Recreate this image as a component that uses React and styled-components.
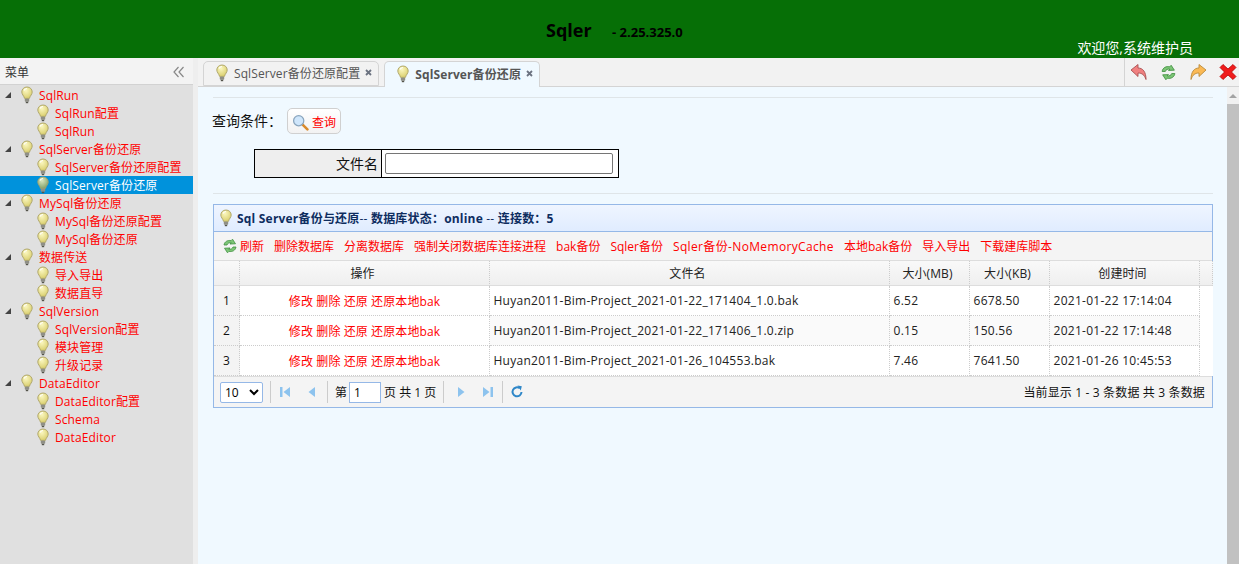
import { useId } from "react"
import styled, { createGlobalStyle } from "styled-components"

const GlobalStyle = createGlobalStyle`
  html, body {
    margin: 0;
    padding: 0;
    height: 100%;
    overflow: hidden;
  }
  body {
    font-family: "Open Sans", "Noto Sans CJK SC", sans-serif;
    font-size: 12px;
    color: #111;
  }
  * { box-sizing: border-box; }
`

const Page = styled.div`
  width: 1239px;
  height: 564px;
  display: flex;
  flex-direction: column;
  overflow: hidden;
`

const Header = styled.header`
  height: 58px;
  flex: none;
  background: #066f06;
  display: flex;
  padding: 0 46px 0 546px;
`

const Brand = styled.h1`
  width: 66px;
  margin: 18px 0 0;
  font-size: 18px;
  line-height: 24px;
  font-weight: 700;
  color: #000;
`

const Version = styled.span`
  margin-top: 24px;
  font-size: 13px;
  line-height: 16px;
  font-weight: 700;
  color: #000;
`

const Welcome = styled.div`
  align-self: flex-end;
  margin-left: auto;
  margin-bottom: 1px;
  font-size: 14px;
  line-height: 18px;
  color: #fff;
`

const Body = styled.div`
  flex: 1;
  display: flex;
  min-height: 0;
`

const Sidebar = styled.aside`
  width: 193px;
  flex: none;
  background: #e0e0e0;
`

const SideHead = styled.div`
  height: 27px;
  display: flex;
  align-items: center;
  justify-content: space-between;
  padding: 2px 8px 0 5px;
  background: #f3f3f3;
  border-bottom: 1px solid #d2d2d2;
  font-size: 12px;
  color: #333;
`

const Tree = styled.ul`
  list-style: none;
  margin: 1px 0 0;
  padding: 0;
`

const TreeRow = styled.li`
  height: 18px;
  display: flex;
  align-items: center;
  padding-left: ${p => (p.$child ? 36 : 20)}px;
  position: relative;
  background: ${p => (p.$active ? "#0092dc" : "transparent")};
  color: ${p => (p.$active ? "#fff" : "#f00")};
  font-size: 12px;
  letter-spacing: 0.12px;
  white-space: nowrap;
  gap: 5px;
`

const Expander = styled.span`
  position: absolute;
  left: 5px;
  top: 6px;
  width: 0;
  height: 0;
  border-style: solid;
  border-width: 0 0 6px 6px;
  border-color: transparent transparent #444 transparent;
`

const Splitter = styled.div`
  width: 5px;
  flex: none;
  background: #eeeeee;
`

const Main = styled.main`
  flex: 1;
  min-width: 0;
  display: flex;
  flex-direction: column;
`

const TabStrip = styled.div`
  height: 29px;
  flex: none;
  display: flex;
  align-items: flex-end;
  justify-content: space-between;
  background: #f2f2f2;
  border-bottom: 1px solid #d4d4d4;
  padding-left: 5px;
`

const Tabs = styled.div`
  display: flex;
  gap: 5px;
  align-items: flex-end;
`

const Tab = styled.div`
  height: ${p => (p.$active ? 26 : 25)}px;
  margin-bottom: ${p => (p.$active ? -1 : 0)}px;
  display: flex;
  align-items: center;
  padding: 0 6px 2px 11px;
  gap: 5px;
  border: 1px solid #d4d4d4;
  border-bottom: ${p => (p.$active ? "none" : "1px solid #d4d4d4")};
  border-radius: 5px 5px 0 0;
  background: ${p => (p.$active ? "#f0f9ff" : "#f2f2f2")};
  color: #555;
  font-size: 12px;
  letter-spacing: 0.1px;
  font-weight: ${p => (p.$active ? 700 : 400)};
`

const TabTools = styled.div`
  height: 28px;
  width: 115px;
  display: flex;
  align-items: center;
  justify-content: space-between;
  border-left: 1px solid #d4d4d4;
  padding: 0 2px 0 5px;
`

const ContentRow = styled.div`
  flex: 1;
  display: flex;
  min-height: 0;
`

const Content = styled.div`
  flex: 1;
  min-width: 0;
  background: #f0f9ff;
  padding: 10px 14px 0 15px;
`

const Rule = styled.div`
  height: 1px;
  background: #dfe5e8;
`

const QueryRow = styled.div`
  display: flex;
  align-items: center;
  gap: 5px;
  height: 26px;
  margin: 10px 0 0 -1px;
  font-size: 14px;
`

const QueryLabel = styled.span`
  margin-bottom: 3px;
`

const QueryButton = styled.button`
  width: 54px;
  height: 26px;
  padding: 2px 0 0;
  display: flex;
  align-items: center;
  justify-content: center;
  gap: 3px;
  border: 1px solid #d0d0d0;
  border-radius: 5px;
  background: linear-gradient(#fff, #f2f2f2);
  color: #f00;
  font: inherit;
  font-size: 12px;
`

const FilterTable = styled.div`
  width: 365px;
  height: 29px;
  margin: 15px 0 15px 41px;
  display: grid;
  grid-template-columns: 127px 1fr;
  border: 1px solid #000;
`

const FilterLabel = styled.div`
  background: #eee;
  border-right: 1px solid #000;
  text-align: right;
  padding-right: 3px;
  line-height: 27px;
  font-size: 14px;
`

const FilterCell = styled.div`
  padding: 3px 5px 3px 3px;
  background: #fff;
`

const FilterInput = styled.input`
  width: 100%;
  height: 21px;
  display: block;
  border: 1px solid #767676;
  border-radius: 2px;
  background: #fff;
`

const Panel = styled.section`
  margin-top: 10px;
  border: 1px solid #95b8e7;
`

const PanelTitle = styled.div`
  height: 27px;
  display: flex;
  align-items: center;
  gap: 4px;
  padding-left: 5px;
  background: linear-gradient(#eff5ff, #e0ecff);
  border-bottom: 1px solid #95b8e7;
  color: #0e2d5f;
  font-size: 12px;
  letter-spacing: 0.2px;
  white-space: pre;
`

const Strong = styled.b`
  font-weight: 700;
`

const Toolbar = styled.div`
  height: 29px;
  display: flex;
  align-items: center;
  padding-left: 8px;
  background: #f4f4f4;
  border-bottom: 1px solid #ddd;
  color: #f00;
  font-size: 12px;
  white-space: nowrap;
`

const ToolIcon = styled.span`
  display: flex;
  margin-right: 2px;
`

const ToolLink = styled.span`
  margin-right: 10px;
  letter-spacing: ${p => (p.$wide ? 0.35 : 0)}px;
`

const Grid = styled.table`
  width: 999px;
  table-layout: fixed;
  border-collapse: separate;
  border-spacing: 0;
  background: #fff;
`

const HeadCell = styled.th`
  height: 25px;
  padding: 0 4px 0 0;
  font-size: 12px;
  font-weight: 400;
  letter-spacing: 0.1px;
  color: #222;
  background: linear-gradient(#f9f9f9, #efefef);
  border-right: 1px dotted #ccc;
  border-bottom: 1px solid #ddd;
`

const IndexCell = styled.td`
  height: 30px;
  padding: 0 0 0 9px;
  background: #f4f4f4;
  border-right: 1px dotted #ccc;
  border-bottom: 1px dotted #ccc;
`

const ActionCell = styled.td`
  height: 30px;
  padding: 0;
  text-align: center;
  color: #f00;
  letter-spacing: 0.1px;
  border-right: 1px dotted #ccc;
  border-bottom: 1px dotted #ccc;
`

const Cell = styled.td`
  height: 30px;
  padding: 0 3px 0 3.5px;
  white-space: nowrap;
  letter-spacing: 0.27px;
  color: #222;
  background: ${p => (p.$odd ? "#fafafa" : "#fff")};
  border-right: 1px dotted #ccc;
  border-bottom: 1px dotted #ccc;
`

const Filler = styled.td`
  padding: 0;
  background: #fff;
`

const Pager = styled.div`
  height: 31px;
  display: flex;
  align-items: center;
  padding: 0 7px 0 6px;
  background: #f4f4f4;
  border-top: 1px solid #ddd;
  font-size: 12px;
`

const PageSize = styled.select`
  width: 43px;
  height: 21px;
  border: 1px solid #95b8e7;
  border-radius: 2px;
  background: #fff;
  font: inherit;
  font-size: 12px;
  padding: 0;
`

const Sep = styled.span`
  width: 1px;
  height: 22px;
  margin: 0 ${p => p.$gap}px 0 ${p => p.$left ?? p.$gap}px;
  background: #ccc;
`

const PagerButton = styled.span`
  display: flex;
  width: 16px;
  justify-content: center;
  margin-right: ${p => p.$gap ?? 0}px;
`

const PageInput = styled.input`
  width: 32px;
  height: 21px;
  margin: 0 3px 0 2px;
  padding: 0 4px;
  border: 1px solid #95b8e7;
  font: inherit;
  font-size: 12px;
`

const PageInfo = styled.span`
  margin-left: auto;
  letter-spacing: 0.15px;
`

const Scrollbar = styled.div`
  width: 12px;
  flex: none;
  display: flex;
  flex-direction: column;
  background: #f1f1f1;
`

const ScrollUp = styled.div`
  height: 17px;
  flex: none;
  display: flex;
  align-items: center;
  justify-content: center;

  &::before {
    content: '';
    border-style: solid;
    border-width: 0 4px 4px 4px;
    border-color: transparent transparent #a3a3a3 transparent;
  }
`

const ScrollThumb = styled.div`
  flex: 1;
  background: #c1c1c1;
`

const Icon = styled.svg`
  flex: none;
  transform: ${p => (p.$flip ? "scaleX(-1)" : "none")};
`

function Bulb({ dim }) {
  const id = useId()
  const light = dim ? "#dbe8c0" : "#fbf7c0"
  const dark = dim ? "#7f9f68" : "#d8cd6a"
  return (
    <Icon width="14" height="18" viewBox="0 0 14 18">
      <defs>
        <radialGradient id={id} cx="0.4" cy="0.3" r="0.75">
          <stop offset="0" stopColor={light} />
          <stop offset="1" stopColor={dark} />
        </radialGradient>
      </defs>
      <path d="M7 1C3.900 1 1.800 3.300 1.800 6c0 2.400 2 3.600 2.800 6.400h4.800C10.200 9.600 12.200 8.400 12.200 6 12.200 3.300 10.100 1 7 1z" fill={`url(#${id})`} stroke="#aaa266" strokeWidth="0.900" />
      <path d="M4 4.500C4.500 3.300 5.600 2.600 7 2.500" fill="none" stroke="#ffffff" strokeWidth="1.200" />
      <rect x="4.800" y="12.800" width="4.400" height="3" rx="0.800" fill="#8f8f86" />
      <rect x="5.800" y="15.800" width="2.400" height="1.400" fill="#55554c" />
    </Icon>
  )
}

function Refresh({ size = 16 }) {
  return (
    <Icon width={size} height={size} viewBox="0 0 16 16">
      <path d="M2 7C2.500 3.500 6 1.800 9 2.700L10.500 1.200 13.500 5.800 8 6 9.300 4.900C7.300 4.400 5.500 5.300 5 7z" fill="#7cc576" stroke="#3f8f3f" strokeWidth="0.800" />
      <path d="M14 9C13.500 12.500 10 14.200 7 13.300L5.500 14.800 2.500 10.200 8 10 6.700 11.100C8.700 11.600 10.500 10.700 11 9z" fill="#7cc576" stroke="#3f8f3f" strokeWidth="0.800" />
    </Icon>
  )
}

function Arrow({ fill, stroke, flip }) {
  return (
    <Icon width="18" height="18" viewBox="0 0 18 18" $flip={flip}>
      <path d="M1 7L8 1.500V5C13 5 16 9 16 16.500 14.500 12 12 10 8 10V13.500z" fill={fill} stroke={stroke} strokeWidth="0.900" strokeLinejoin="round" />
    </Icon>
  )
}

function CloseX() {
  return (
    <Icon width="18" height="18" viewBox="0 0 18 18">
      <path d="M4 1.500L9 6 14 1.500 17 4.500 12.500 9 17 13.500 14 16.500 9 12 4 16.500 1 13.500 5.500 9 1 4.500z" fill="#f01c1c" stroke="#b50000" strokeWidth="0.800" strokeLinejoin="round" />
    </Icon>
  )
}

function TabX() {
  return (
    <Icon width="7" height="7" viewBox="0 0 7 7">
      <path d="M1 1l5 5M6 1L1 6" fill="none" stroke="#6b7280" strokeWidth="1.800" />
    </Icon>
  )
}

function Search() {
  return (
    <Icon width="17" height="17" viewBox="0 0 16 16">
      <line x1="9.500" y1="9.500" x2="14.500" y2="14.500" stroke="#d98a2b" strokeWidth="2.400" strokeLinecap="round" />
      <circle cx="6.300" cy="6.300" r="4.800" fill="#cfe6fb" stroke="#8aa5bd" strokeWidth="1.200" />
    </Icon>
  )
}

function Collapse() {
  return (
    <Icon width="12" height="12" viewBox="0 0 12 12">
      <path d="M5.500 1L1 6l4.500 5M10.500 1L6 6l4.500 5" fill="none" stroke="#888" strokeWidth="1.200" />
    </Icon>
  )
}

function PagerIcon({ kind }) {
  const shapes = {
    first: "M1 2h2.500v10H1zM11 2v10L4.500 7z",
    prev: "M10 2v10L3.500 7z",
    next: "M4 2v10l6.500-5z",
    last: "M3 2v10l6.500-5zM10.500 2H13v10h-2.500z",
  }
  return (
    <Icon width="14" height="14" viewBox="0 0 14 14">
      <path d={shapes[kind]} fill="#8dc3ee" />
    </Icon>
  )
}

function PagerReload() {
  return (
    <Icon width="14" height="14" viewBox="0 0 14 14">
      <path d="M9.800 3.300A4.500 4.500 0 1 0 11.500 7" fill="none" stroke="#2f87c8" strokeWidth="2" />
      <path d="M7.500 0.500L11.800 1.200 10.800 5.500z" fill="#2f87c8" />
    </Icon>
  )
}

const menu = [
  { name: "SqlRun", items: ["SqlRun配置", "SqlRun"] },
  { name: "SqlServer备份还原", items: ["SqlServer备份还原配置", "SqlServer备份还原"] },
  { name: "MySql备份还原", items: ["MySql备份还原配置", "MySql备份还原"] },
  { name: "数据传送", items: ["导入导出", "数据直导"] },
  { name: "SqlVersion", items: ["SqlVersion配置", "模块管理", "升级记录"] },
  { name: "DataEditor", items: ["DataEditor配置", "Schema", "DataEditor"] },
]

const toolLinks = [
  "刷新",
  "删除数据库",
  "分离数据库",
  "强制关闭数据库连接进程",
  "bak备份",
  "Sqler备份",
  "Sqler备份-NoMemoryCache",
  "本地bak备份",
  "导入导出",
  "下载建库脚本",
]

const rows = [
  ["Huyan2011-Bim-Project_2021-01-22_171404_1.0.bak", "6.52", "6678.50", "2021-01-22 17:14:04"],
  ["Huyan2011-Bim-Project_2021-01-22_171406_1.0.zip", "0.15", "150.56", "2021-01-22 17:14:48"],
  ["Huyan2011-Bim-Project_2021-01-26_104553.bak", "7.46", "7641.50", "2021-01-26 10:45:53"],
]

const columns = [26, 250, 400, 80, 80, 150, 13]

export default function App() {
  return (
    <Page>
      <GlobalStyle />
      <Header>
        <Brand>Sqler</Brand>
        <Version> - 2.25.325.0</Version>
        <Welcome>欢迎您,系统维护员</Welcome>
      </Header>
      <Body>
        <Sidebar>
          <SideHead>
            菜单
            <Collapse />
          </SideHead>
          <Tree>
            {menu.map(group => (
              <div key={group.name}>
                <TreeRow>
                  <Expander />
                  <Bulb />
                  {group.name}
                </TreeRow>
                {group.items.map(item => {
                  const active = group.name === "SqlServer备份还原" && item === "SqlServer备份还原"
                  return (
                    <TreeRow key={item} $child $active={active}>
                      <Bulb dim={active} />
                      {item}
                    </TreeRow>
                  )
                })}
              </div>
            ))}
          </Tree>
        </Sidebar>
        <Splitter />
        <Main>
          <TabStrip>
            <Tabs>
              <Tab>
                <Bulb />
                SqlServer备份还原配置
                <TabX />
              </Tab>
              <Tab $active>
                <Bulb />
                SqlServer备份还原
                <TabX />
              </Tab>
            </Tabs>
            <TabTools>
              <Arrow fill="#f08080" stroke="#a85050" />
              <Refresh size={17} />
              <Arrow fill="#fbb954" stroke="#b98a3a" flip />
              <CloseX />
            </TabTools>
          </TabStrip>
          <ContentRow>
            <Content>
              <Rule />
              <QueryRow>
                <QueryLabel>查询条件：</QueryLabel>
                <QueryButton>
                  <Search />
                  查询
                </QueryButton>
              </QueryRow>
              <FilterTable>
                <FilterLabel>文件名</FilterLabel>
                <FilterCell>
                  <FilterInput />
                </FilterCell>
              </FilterTable>
              <Rule />
              <Panel>
                <PanelTitle>
                  <Bulb />
                  <span>
                    <Strong>Sql Server备份与还原</Strong>-- <Strong>数据库状态：online</Strong> -- <Strong>连接数：5</Strong>
                  </span>
                </PanelTitle>
                <Toolbar>
                  <ToolIcon>
                    <Refresh />
                  </ToolIcon>
                  {toolLinks.map(label => (
                    <ToolLink key={label} $wide={label.includes("NoMemory")}>{label}</ToolLink>
                  ))}
                </Toolbar>
                <Grid>
                  <colgroup>
                    {columns.map((w, i) => (
                      <col key={i} width={w} />
                    ))}
                  </colgroup>
                  <thead>
                    <tr>
                      <HeadCell />
                      <HeadCell>操作</HeadCell>
                      <HeadCell>文件名</HeadCell>
                      <HeadCell>大小(MB)</HeadCell>
                      <HeadCell>大小(KB)</HeadCell>
                      <HeadCell>创建时间</HeadCell>
                      <HeadCell />
                    </tr>
                  </thead>
                  <tbody>
                    {rows.map((row, i) => (
                      <tr key={row[0]}>
                        <IndexCell>{i + 1}</IndexCell>
                        <ActionCell>修改 删除 还原 还原本地bak</ActionCell>
                        {row.map(value => (
                          <Cell key={value} $odd={i === 1}>{value}</Cell>
                        ))}
                        <Filler />
                      </tr>
                    ))}
                  </tbody>
                </Grid>
                <Pager>
                  <PageSize defaultValue="10">
                    <option>10</option>
                  </PageSize>
                  <Sep $gap={7} />
                  <PagerButton $gap={10}><PagerIcon kind="first" /></PagerButton>
                  <PagerButton><PagerIcon kind="prev" /></PagerButton>
                  <Sep $gap={7} />
                  第
                  <PageInput defaultValue="1" />
                  页 共 1 页
                  <Sep $gap={9} $left={7} />
                  <PagerButton $gap={10}><PagerIcon kind="next" /></PagerButton>
                  <PagerButton><PagerIcon kind="last" /></PagerButton>
                  <Sep $gap={6} $left={7} />
                  <PagerButton><PagerReload /></PagerButton>
                  <PageInfo>当前显示 1 - 3 条数据 共 3 条数据</PageInfo>
                </Pager>
              </Panel>
            </Content>
            <Scrollbar>
              <ScrollUp />
              <ScrollThumb />
            </Scrollbar>
          </ContentRow>
        </Main>
      </Body>
    </Page>
  )
}
